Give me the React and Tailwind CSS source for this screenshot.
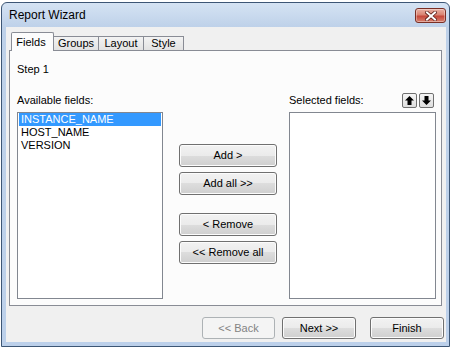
import React from "react";

function Btn({ children, className = "", disabled = false }) {
  return (
    <div
      className={
        disabled
          ? `flex items-center justify-center rounded-[3px] border border-[#adb2b5] bg-[#f4f4f4] text-[#838383] ${className}`
          : `flex items-center justify-center rounded-[3px] border border-[#707070] bg-[linear-gradient(#f2f2f2_0%,#ebebeb_50%,#dddddd_50%,#cfcfcf_100%)] shadow-[inset_0_0_0_1px_#fcfcfc] text-black ${className}`
      }
    >
      {children}
    </div>
  );
}

function ArrowBtn({ down = false }) {
  return (
    <div className="w-[15px] h-[15px] flex items-center justify-center rounded-[2px] border border-[#707070] bg-[linear-gradient(#f6f6f6,#dedede)]">
      <svg width="9" height="9" viewBox="0 0 9 9">
        {down ? (
          <polygon points="4.5,9 9,4.5 6.5,4.5 6.5,0 2.5,0 2.5,4.5 0,4.5" fill="#000" />
        ) : (
          <polygon points="4.5,0 9,4.5 6.5,4.5 6.5,9 2.5,9 2.5,4.5 0,4.5" fill="#000" />
        )}
      </svg>
    </div>
  );
}

function CloseBtn() {
  return (
    <div className="w-[31px] h-[15px] mt-[5px] rounded-[3px] border border-[#7a2f25] bg-[linear-gradient(#eab0a3_0%,#d98371_45%,#c5473a_55%,#d8826f_100%)] shadow-[inset_0_0_0_1px_rgba(255,255,255,0.35)] flex items-center justify-center">
      <svg width="12" height="10" viewBox="0 0 12 10">
        <path d="M2 1.5 L10 8.5 M10 1.5 L2 8.5" stroke="#5a1f18" strokeWidth="3.6" strokeLinecap="square" />
        <path d="M2 1.5 L10 8.5 M10 1.5 L2 8.5" stroke="#ffffff" strokeWidth="2" strokeLinecap="square" />
      </svg>
    </div>
  );
}

export default function App() {
  return (
    <div className="w-[454px] h-[348px] bg-white overflow-hidden [font-family:'Liberation_Sans',Arial,sans-serif] text-[11px] text-black">
      <div className="ml-[1px] mt-[2px] w-[449px] h-[345px] rounded-t-[6px] border border-[#3d5675] bg-[linear-gradient(180deg,#d5e3f3_0px,#bed1e9_24px,#bcd0ea_100%)] flex flex-col">
        {/* Title bar */}
        <div className="h-[24px] flex items-start justify-between pl-[7px] pr-[3px]">
          <span className="text-[12px] leading-[24px] text-black">Report Wizard</span>
          <CloseBtn />
        </div>
        {/* Client area */}
        <div className="ml-[4px] w-[440px] h-[315px] bg-[#f0f0f0] flex flex-col pt-[5px] pl-[3px]">
          {/* Tabs */}
          <div className="h-[18px] flex items-end pl-[2px]">
            <div className="relative z-10 -mb-px w-[43px] h-[19px] flex items-center justify-center pr-[3px] rounded-t-[2px] border border-b-0 border-[#898c95] bg-[#fcfcfc]">
              Fields
            </div>
            <div className="-ml-px w-[46px] h-[14px] flex items-center justify-center border border-b-0 border-[#898c95] bg-[linear-gradient(#f3f3f3,#e2e2e2)]">
              Groups
            </div>
            <div className="-ml-px w-[46px] h-[14px] flex items-center justify-center border border-b-0 border-[#898c95] bg-[linear-gradient(#f3f3f3,#e2e2e2)]">
              Layout
            </div>
            <div className="-ml-px w-[41px] h-[14px] flex items-center justify-center border border-b-0 border-[#898c95] bg-[linear-gradient(#f3f3f3,#e2e2e2)]">
              Style
            </div>
          </div>
          {/* Panel */}
          <div className="w-[433px] h-[256px] border border-[#898c95] bg-[#fcfcfc] flex flex-col pt-[12px] pl-[7px]">
            <div className="h-[13px] leading-[13px]">Step 1</div>
            <div className="mt-[17px] flex">
              {/* Available */}
              <div className="w-[146px] flex flex-col">
                <div className="h-[15px] flex items-center">Available fields:</div>
                <div className="mt-[4px] h-[187px] border border-[#828790] bg-white px-px">
                  <div className="h-[13px] leading-[13px] pl-[2px] bg-[#3399ff] text-white">INSTANCE_NAME</div>
                  <div className="h-[13px] leading-[13px] pl-[2px]">HOST_NAME</div>
                  <div className="h-[13px] leading-[13px] pl-[2px]">VERSION</div>
                </div>
              </div>
              {/* Buttons */}
              <div className="ml-[16px] w-[98px] pt-[51px] flex flex-col">
                <Btn className="h-[23px]">Add &gt;</Btn>
                <Btn className="h-[23px] mt-[5px]">Add all &gt;&gt;</Btn>
                <Btn className="h-[23px] mt-[18px]">&lt; Remove</Btn>
                <Btn className="h-[23px] mt-[5px]">&lt;&lt; Remove all</Btn>
              </div>
              {/* Selected */}
              <div className="ml-[12px] w-[147px] flex flex-col">
                <div className="h-[15px] flex items-center justify-between pr-[2px]">
                  <span>Selected fields:</span>
                  <div className="flex gap-[2px]">
                    <ArrowBtn />
                    <ArrowBtn down />
                  </div>
                </div>
                <div className="mt-[4px] h-[187px] border border-[#828790] bg-white" />
              </div>
            </div>
          </div>
          {/* Bottom buttons */}
          <div className="mt-[11px] h-[22px] flex justify-end pr-[2px]">
            <Btn disabled className="w-[73px] h-[22px]">&lt;&lt; Back</Btn>
            <Btn className="ml-[7px] w-[74px] h-[22px]">Next &gt;&gt;</Btn>
            <Btn className="ml-[14px] w-[74px] h-[22px]">Finish</Btn>
          </div>
        </div>
      </div>
    </div>
  );
}
